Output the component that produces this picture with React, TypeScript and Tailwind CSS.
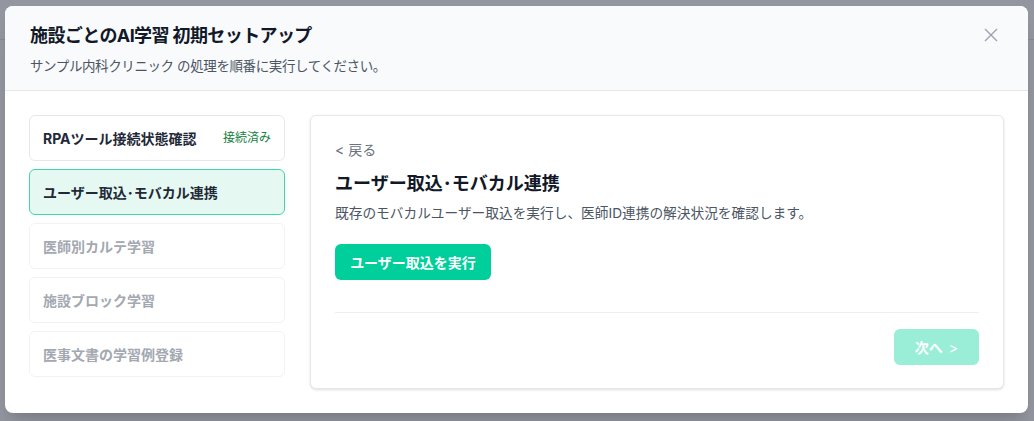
import React from "react"

const steps = [
  { label: "RPAツール接続状態確認", state: "done" },
  { label: "ユーザー取込･モバカル連携", state: "active" },
  { label: "医師別カルテ学習", state: "locked" },
  { label: "施設ブロック学習", state: "locked" },
  { label: "医事文書の学習例登録", state: "locked" },
]

function StepCard({ label, state }: { label: string; state: string }) {
  if (state === "active") {
    return (
      <div className="flex h-[46px] items-center rounded-md border border-[#3fd5a8] bg-[#e5f8f2] px-[13px]">
        <span className="text-[14px] font-bold text-[#1f2937]">{label}</span>
      </div>
    )
  }
  if (state === "done") {
    return (
      <div className="flex h-[46px] items-center justify-between rounded-md border border-[#e5e7eb] bg-white px-[13px]">
        <span className="text-[14px] font-bold text-[#1f2937]">{label}</span>
        <span className="text-[12px] text-[#15803d]">接続済み</span>
      </div>
    )
  }
  return (
    <div className="flex h-[46px] items-center rounded-md border border-[#f1f2f4] bg-white px-[13px]">
      <span className="text-[14px] font-bold text-[#a3a8b1]">{label}</span>
    </div>
  )
}

export default function App() {
  return (
    <div
      className="relative h-[421px] w-full overflow-hidden bg-white"
      style={{ fontFamily: '"Inter", "Noto Sans CJK JP", sans-serif' }}
    >
      {/* page behind the dialog */}
      <div className="flex h-[40px] items-center justify-between border-b border-gray-200 px-3">
        <span className="text-[13px] text-gray-700">さんサンプル会員 | サンプル内科クリニック</span>
        <div className="flex items-center gap-6 pr-4">
          <span className="rounded bg-[#3b5fc0] px-5 py-1 text-[13px] text-white">チャートを開始</span>
          <span className="h-4 w-4 rounded-full border-2 border-gray-600" />
          <span className="h-4 w-4 rounded-full border-2 border-gray-600" />
        </div>
      </div>

      {/* overlay + dialog */}
      <div className="absolute inset-0 bg-[#0f172a]/45 pl-[5px] pr-[6px] pt-[6px]">
        <div className="flex flex-col overflow-hidden rounded-lg bg-white shadow-xl">
          <div className="relative h-[85px] border-b border-[#e5e7eb] bg-[#f9fafc] px-[25px] pt-[16px]">
            <h1 className="text-[18px] font-bold leading-[28px] tracking-[-0.6px] text-[#111827]">
              施設ごとのAI学習 初期セットアップ
            </h1>
            <p className="mt-[6px] text-[13.5px] leading-[20px] tracking-[-0.4px] text-[#4b5563]">
              サンプル内科クリニック の処理を順番に実行してください。
            </p>
            <button className="absolute right-[30px] top-[22px] text-[#9ca3af]">
              <svg width="14" height="14" viewBox="0 0 14 14" fill="none" stroke="currentColor" strokeWidth="1.4">
                <path d="M1 1l12 12M13 1L1 13" />
              </svg>
            </button>
          </div>

          <div className="flex gap-[25px] p-6">
            <div className="flex w-64 flex-col gap-2">
              {steps.map((s) => (
                <StepCard key={s.label} label={s.label} state={s.state} />
              ))}
            </div>

            <div className="flex h-[274px] flex-1 flex-col rounded-md border border-[#e5e7eb] bg-white px-6 pt-[24px] shadow-sm">
              <button className="self-start text-[14px] leading-[20px] text-[#6b7280]">&lt; 戻る</button>
              <h2 className="mt-[10px] text-[18px] font-bold leading-[28px] text-[#111827]">
                ユーザー取込･モバカル連携
              </h2>
              <p className="mt-[5px] text-[13.7px] leading-[20px] text-[#4b5563]">
                既存のモバカルユーザー取込を実行し、医師ID連携の解決状況を確認します。
              </p>
              <button className="mt-[21px] h-9 w-[156px] rounded-md bg-[#00cf9b] text-[14px] font-bold text-white">
                ユーザー取込を実行
              </button>
              <div className="mt-[32px] border-t border-[#eeeff1]" />
              <div className="flex justify-end pt-4">
                <button className="flex h-9 w-[85px] items-center justify-center gap-[6px] rounded-md bg-[#9aeed8] text-[14px] font-bold text-white">
                  <span>次へ</span>
                  <span className="font-normal">&gt;</span>
                </button>
              </div>
            </div>
          </div>
        </div>
      </div>
    </div>
  )
}
